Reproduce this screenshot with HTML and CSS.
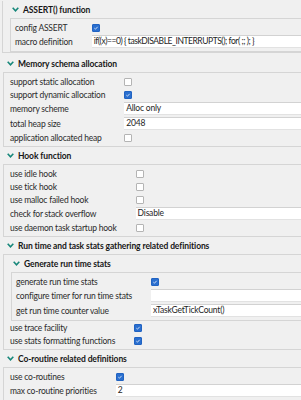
FILE: index.html
```html
<!DOCTYPE html>
<html lang="en">
<head>
    <meta charset="UTF-8">
    <meta name="viewport" content="width=device-width, initial-scale=1.0">
    <title>FreeRTOS configuration</title>
    <link rel="stylesheet" href="styles.css">
</head>
<body>
    <div class="page">
        <div class="box box-top">
            <div class="group sub">
                <div class="group-head"><svg class="chev" viewBox="0 0 7 5"><path d="M0.7 0.8 L3.5 3.8 L6.3 0.8"/></svg>ASSERT() function</div>
                <div class="box">
                    <div class="form form-assert">
                        <div class="lbl">config ASSERT</div>
                        <div class="val"><span class="check on"><svg viewBox="0 0 8 8"><path d="M1.8 4.2 L3.3 5.6 L6.2 2.4"/></svg></span></div>
                        <div class="lbl">macro definition</div>
                        <div class="val val-input"><div class="field field-code">if((x)==0) { taskDISABLE_INTERRUPTS(); for( ;; ); }</div></div>
                    </div>
                </div>
            </div>
        </div>

        <div class="group sep">
            <div class="group-head"><svg class="chev" viewBox="0 0 7 5"><path d="M0.7 0.8 L3.5 3.8 L6.3 0.8"/></svg>Memory schema allocation</div>
            <div class="box">
                <div class="form">
                    <div class="lbl">support static allocation</div>
                    <div class="val"><span class="check"></span></div>
                    <div class="lbl">support dynamic allocation</div>
                    <div class="val"><span class="check on"><svg viewBox="0 0 8 8"><path d="M1.8 4.2 L3.3 5.6 L6.2 2.4"/></svg></span></div>
                    <div class="lbl">memory scheme</div>
                    <div class="val val-input"><div class="field">Alloc only</div></div>
                    <div class="lbl">total heap size</div>
                    <div class="val val-input"><div class="field">2048</div></div>
                    <div class="lbl">application allocated heap</div>
                    <div class="val"><span class="check"></span></div>
                </div>
            </div>
        </div>

        <div class="group">
            <div class="group-head"><svg class="chev" viewBox="0 0 7 5"><path d="M0.7 0.8 L3.5 3.8 L6.3 0.8"/></svg>Hook function</div>
            <div class="box">
                <div class="form">
                    <div class="lbl">use idle hook</div>
                    <div class="val"><span class="check"></span></div>
                    <div class="lbl">use tick hook</div>
                    <div class="val"><span class="check"></span></div>
                    <div class="lbl">use malloc failed hook</div>
                    <div class="val"><span class="check"></span></div>
                    <div class="lbl">check for stack overflow</div>
                    <div class="val val-input"><div class="field">Disable</div></div>
                    <div class="lbl">use daemon task startup hook</div>
                    <div class="val"><span class="check"></span></div>
                </div>
            </div>
        </div>

        <div class="group">
            <div class="group-head"><svg class="chev" viewBox="0 0 7 5"><path d="M0.7 0.8 L3.5 3.8 L6.3 0.8"/></svg>Run time and task stats gathering related definitions</div>
            <div class="box box-nest">
                <div class="group sub">
                    <div class="group-head"><svg class="chev" viewBox="0 0 7 5"><path d="M0.7 0.8 L3.5 3.8 L6.3 0.8"/></svg>Generate run time stats</div>
                    <div class="box">
                        <div class="form">
                            <div class="lbl">generate run time stats</div>
                            <div class="val"><span class="check on"><svg viewBox="0 0 8 8"><path d="M1.8 4.2 L3.3 5.6 L6.2 2.4"/></svg></span></div>
                            <div class="lbl">configure timer for run time stats</div>
                            <div class="val val-input"><div class="field"></div></div>
                            <div class="lbl">get run time counter value</div>
                            <div class="val val-input"><div class="field">xTaskGetTickCount()</div></div>
                        </div>
                    </div>
                </div>
                <div class="form">
                    <div class="lbl">use trace facility</div>
                    <div class="val"><span class="check on"><svg viewBox="0 0 8 8"><path d="M1.8 4.2 L3.3 5.6 L6.2 2.4"/></svg></span></div>
                    <div class="lbl">use stats formatting functions</div>
                    <div class="val"><span class="check on"><svg viewBox="0 0 8 8"><path d="M1.8 4.2 L3.3 5.6 L6.2 2.4"/></svg></span></div>
                </div>
            </div>
        </div>

        <div class="group">
            <div class="group-head"><svg class="chev" viewBox="0 0 7 5"><path d="M0.7 0.8 L3.5 3.8 L6.3 0.8"/></svg>Co-routine related definitions</div>
            <div class="box">
                <div class="form">
                    <div class="lbl">use co-routines</div>
                    <div class="val"><span class="check on"><svg viewBox="0 0 8 8"><path d="M1.8 4.2 L3.3 5.6 L6.2 2.4"/></svg></span></div>
                    <div class="lbl">max co-routine priorities</div>
                    <div class="val val-input"><div class="field">2</div></div>
                </div>
            </div>
        </div>
    </div>
</body>
</html>
```

FILE: styles.css
```css
html, body {
    margin: 0;
    overflow: hidden;
}
body {
    background-color: #f0f0f0;
    font-family: Lato, "Noto Sans", sans-serif;
    font-size: 8.5px;
    letter-spacing: -0.2px;
    color: #2b2b2b;
    width: 301px;
    height: 400px;
}
.page {
    width: 340px;
    padding-top: 1px;
}
.group-head {
    height: 17px;
    display: flex;
    align-items: center;
    padding-left: 7px;
    font-weight: 700;
    letter-spacing: -0.1px;
    color: #171717;
    white-space: nowrap;
}
.chev {
    width: 7px;
    height: 5px;
    margin-right: 4px;
    fill: none;
    stroke: #17877a;
    stroke-width: 1.6;
}
.box {
    margin-left: 3px;
    border: 1px solid #d5d5d5;
    border-right: none;
    padding: 2px 0;
}
.box-top {
    margin-left: 2px;
    border-top: none;
    padding: 0;
    margin-bottom: 2px;
}
.box-nest {
    padding-top: 0;
}
.sub {
    margin-left: 8px;
}
.sub .group-head {
    padding-left: 1px;
}
.sub .box {
    margin-left: -1px;
}
.form {
    display: grid;
    grid-template-columns: max-content 1fr;
    column-gap: 19px;
    padding-left: 6px;
}
.sub .form {
    padding-left: 4px;
}
.form-assert {
    grid-template-columns: minmax(57px, max-content) 1fr;
}
.lbl {
    align-self: center;
    white-space: nowrap;
}
.val {
    height: 13px;
    display: flex;
    align-items: center;
}
.val-input {
    height: 15px;
}
.field {
    flex: 1;
    height: 11px;
    line-height: 11px;
    background-color: #ffffff;
    border-top: 1px solid #d2d2d2;
    border-bottom: 1px solid #e2e2e2;
    padding-left: 2px;
    color: #1e1e1e;
    white-space: nowrap;
    overflow: hidden;
}
.field-code {
    letter-spacing: -0.45px;
}
.check {
    width: 6px;
    height: 6px;
    border: 1px solid #b4b4b4;
    border-radius: 1px;
    background-color: #ffffff;
    display: inline-flex;
}
.check.on {
    background-color: #2a6fcf;
    border-color: #2163c2;
}
.check svg {
    width: 6px;
    height: 6px;
    fill: none;
    stroke: #ffffff;
    stroke-width: 1;
}
```
